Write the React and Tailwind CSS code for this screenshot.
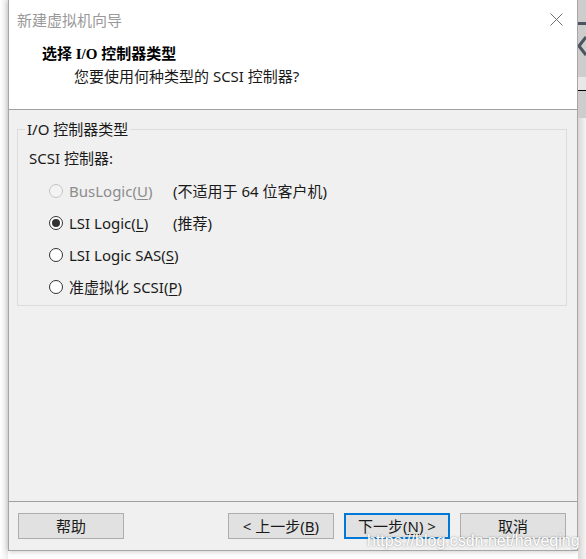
import React from "react";

const UI = { fontFamily: '"Noto Sans", "Noto Sans CJK SC", sans-serif' };

function Radio({ checked, disabled }) {
  return (
    <span
      className={`flex h-[14px] w-[14px] shrink-0 items-center justify-center rounded-full border ${
        disabled ? "border-[#c4c4c4] bg-[#f3f3f3]" : "border-[#333333] bg-white"
      }`}
    >
      {checked && <span className="h-[8px] w-[8px] rounded-full bg-[#333333]" />}
    </span>
  );
}

function Row({ label, keyChar, suffix, note, checked, disabled }) {
  return (
    <div className="flex h-[20px] items-center">
      <Radio checked={checked} disabled={disabled} />
      <span
        className={`ml-[6px] w-[104px] whitespace-nowrap text-[15px] leading-[20px] ${
          disabled ? "text-[#8c8c8c]" : "text-[#1a1a1a]"
        }`}
      >
        {label}(<span className="underline underline-offset-2">{keyChar}</span>){suffix}
      </span>
      {note && (
        <span className="whitespace-nowrap text-[15px] leading-[20px] text-[#1a1a1a]">{note}</span>
      )}
    </div>
  );
}

function Btn({ children, primary, className = "" }) {
  return (
    <div
      className={`flex h-[26px] w-[106px] items-center justify-center text-[15px] leading-[20px] text-[#1a1a1a] ${
        primary ? "border-2 border-[#0078d7] bg-[#e1e1e1]" : "border border-[#adadad] bg-[#e1e1e1]"
      } ${className}`}
    >
      {children}
    </div>
  );
}

export default function App() {
  return (
    <div className="relative flex h-[559px] w-[586px] overflow-hidden bg-white" style={UI}>
      {/* left margin */}
      <div className="h-full w-[8px] bg-gradient-to-r from-white to-[#ededed]" />

      {/* window */}
      <div className="flex h-[551px] w-[570px] flex-col border-x border-b border-[#a6a6a6] bg-[#f0f0f0] shadow-[0_0_6px_rgba(0,0,0,0.25)]">
        {/* header */}
        <div className="relative h-[110px] border-b border-[#a0a0a0] bg-white">
          <div className="flex items-start justify-between pl-[8px] pt-[10px]">
            <span className="text-[15px] leading-[20px] text-[#999999]">新建虚拟机向导</span>
            <svg className="mr-[14px] mt-[3px]" width="13" height="13" viewBox="0 0 13 13">
              <path d="M0.5 0.5 L12.5 12.5 M12.5 0.5 L0.5 12.5" stroke="#707070" strokeWidth="1" fill="none" />
            </svg>
          </div>
          <div
            className="ml-[33px] mt-[14px] text-[15px] font-bold leading-[20px] text-black"
            style={{ fontFamily: '"Liberation Serif", "Noto Sans CJK SC", serif' }}
          >
            选择 I/O 控制器类型
          </div>
          <div className="ml-[65px] mt-[2px] text-[15px] leading-[20px] text-[#1a1a1a]">
            您要使用何种类型的 SCSI 控制器?
          </div>
        </div>

        {/* body */}
        <div className="h-[391px] pl-[8px] pt-[19px]">
          <div className="relative h-[177px] w-[550px] border border-[#dcdcdc]">
            <span className="absolute left-[7px] top-[-11px] bg-[#f0f0f0] px-[2px] text-[15px] leading-[20px] text-[#1a1a1a]">
              I/O 控制器类型
            </span>
            <div className="pl-[11px] pt-[18px]">
              <div className="text-[15px] leading-[20px] text-[#1a1a1a]">SCSI 控制器:</div>
              <div className="ml-[20px] mt-[13px] flex flex-col gap-[12px]">
                <Row label="BusLogic" keyChar="U" disabled note="(不适用于 64 位客户机)" />
                <Row label="LSI Logic" keyChar="L" checked note="(推荐)" />
                <Row label="LSI Logic SAS" keyChar="S" />
                <Row label="准虚拟化 SCSI" keyChar="P" />
              </div>
            </div>
          </div>
        </div>

        {/* footer */}
        <div className="flex h-[48px] items-start border-t border-[#a0a0a0] pl-[9px] pt-[11px]">
          <Btn>帮助</Btn>
          <Btn className="ml-[104px]">
            &lt; 上一步(<span className="underline underline-offset-2">B</span>)
          </Btn>
          <Btn primary className="ml-[10px]">
            下一步(<span className="underline underline-offset-2">N</span>) &gt;
          </Btn>
          <Btn className="ml-[10px]">取消</Btn>
        </div>
      </div>

      {/* right strip: background application */}
      <div className="flex h-full w-[8px] flex-col">
        <div className="relative h-[118px] bg-[#cdcdcd]">
          <div className="mt-[22px] h-[3px] w-full bg-[#4a5560]" />
          <svg className="mt-[10px]" width="8" height="22" viewBox="0 0 8 22">
            <path d="M8 2 L1 11 L8 20" stroke="#4a5560" strokeWidth="3" fill="none" />
          </svg>
          <div className="mt-[20px] h-[14px] w-full border-b border-black bg-[#e8e8e8]" />
        </div>
        <div className="flex-1 bg-gradient-to-r from-[#d8d8d8] to-[#f4f4f4]" />
      </div>

      {/* watermark */}
      <div
        className="pointer-events-none absolute left-[367px] top-[531px] whitespace-nowrap text-[16px] leading-[20px] text-white"
        style={{ fontFamily: '"Liberation Sans", sans-serif', textShadow: "0 0 2px rgba(90,90,90,0.7)" }}
      >
        https://blog.csdn.net/haveqing
      </div>
    </div>
  );
}
